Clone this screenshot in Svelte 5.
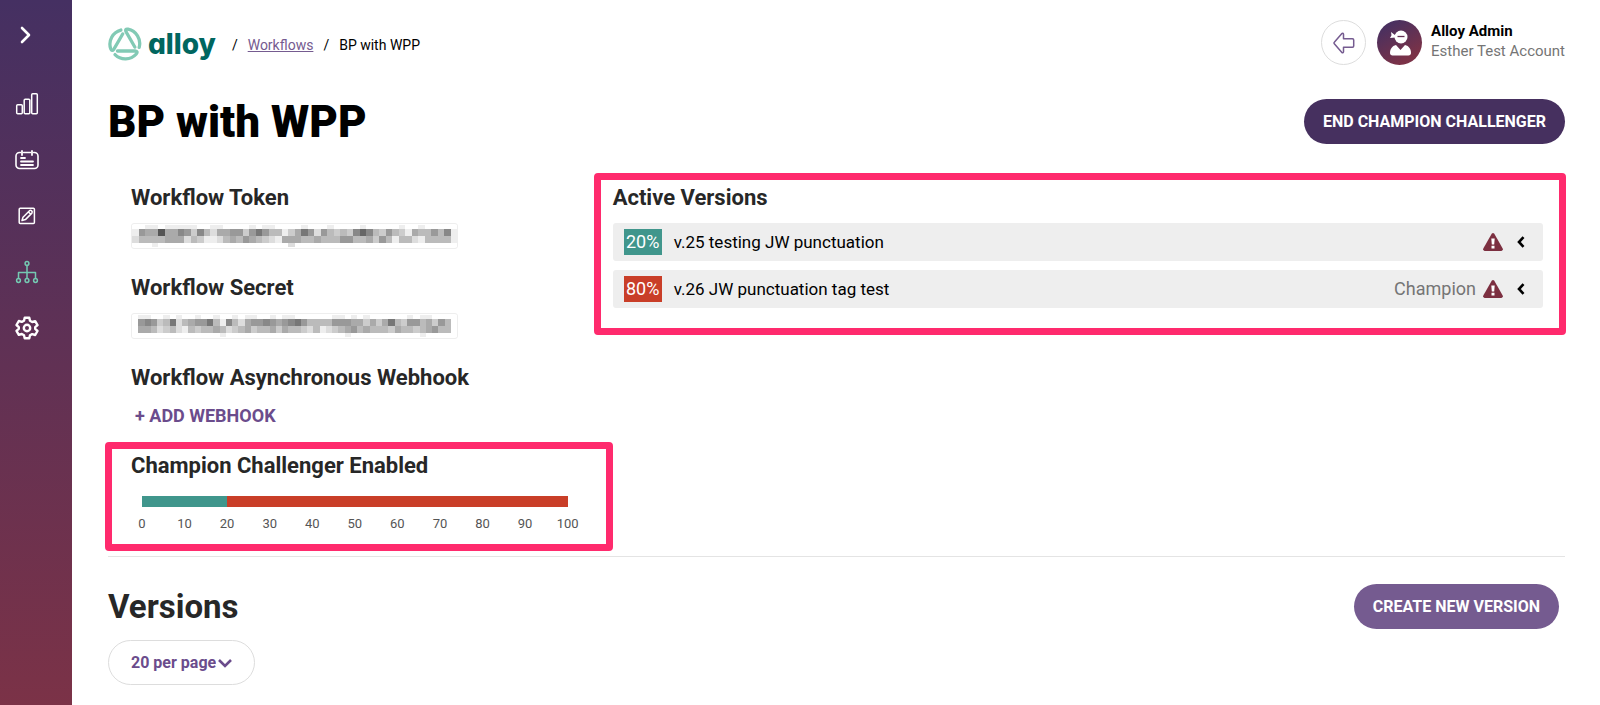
<script lang="ts">
  type Version = {
    percent: number;
    color: string;
    name: string;
    champion: boolean;
  };

  const versions: Version[] = [
    { percent: 20, color: "#40968c", name: "v.25 testing JW punctuation", champion: false },
    { percent: 80, color: "#c93e28", name: "v.26 JW punctuation tag test", champion: true },
  ];

  const ticks = [0, 10, 20, 30, 40, 50, 60, 70, 80, 90, 100];

  // One hex digit per cell, each digit is a grey level
  const credentials = [
    {
      label: "Workflow Token",
      rows: [
        "ffeefeeeeeffeeffffefeeffffefffeffffefffffeffefffff",
        "e9aa5aa89c8bdaa99c979bbeca79d9bcbc868bc9bceabb9b8e",
        "dbbbbaaadbceedbab9abcdeaaabbabbb99bbac9bebbdebbbbe",
        "fffeffffffffffffffffffffdfffffffffffffffffffffffff",
      ],
    },
    {
      label: "Workflow Secret",
      rows: [
        "feeffefeffeffeffefeeffefeeffffffeefefeffffffefeeffff",
        "f989cb7dba997be8bda9989a9879bbbb999aacaca7bc99bac9bf",
        "faabdcbdebcbbabdcbacbbacabbcdbedcba9babbbcabbcba9bbf",
        "ffffffffffffffefffffffffffffffffffefffffffffffefffff",
      ],
    },
  ];

  // Top and height of each row of cells
  const bands = [
    [0, 4],
    [4, 7],
    [11, 7],
    [18, 4],
  ];

  let perPage = "20";
</script>

<div class="shell">
  <nav class="sidebar" aria-label="Main">
    <button type="button" class="nav-item toggle" aria-label="Expand menu">
      <svg width="24" height="24" viewBox="0 0 24 24"><path d="M7 5l7 7-7 7" stroke-width="2.6" /></svg>
    </button>
    <a class="nav-item" href="#dashboard" aria-label="Dashboard">
      <svg width="24" height="24" viewBox="0 0 24 24" stroke-width="1.5">
        <rect x="1.7" y="12.7" width="5.6" height="9" rx="1" />
        <rect x="9.2" y="7.2" width="5.6" height="14.5" rx="1" />
        <rect x="16.7" y="1.7" width="5.6" height="20" rx="1" />
      </svg>
    </a>
    <a class="nav-item" href="#evaluations" aria-label="Evaluations">
      <svg width="24" height="24" viewBox="0 0 24 24" stroke-width="1.6">
        <path d="M5.5 4.5h-1A3.500 3.500 0 0 0 1 8v9a3.500 3.500 0 0 0 3.500 3.500h15A3.500 3.500 0 0 0 23 17V8a3.500 3.500 0 0 0-3.500-3.500h-1M8.500 4.500h7" />
        <path d="M7 3v4M17 3v4M6 10h4M6 13.500h12M6 17h12" stroke-width="1.8" />
      </svg>
    </a>
    <a class="nav-item" href="#review" aria-label="Manual review">
      <svg width="24" height="24" viewBox="0 0 24 24" stroke-width="1.5">
        <rect x="4.200" y="4.200" width="15.200" height="15.200" rx="1" />
        <path d="M7 16.500l1-3.300 6.500-6.500q1.200-.8 2.200.2t.2 2.200l-6.500 6.500zM13.500 8l2 2" />
      </svg>
    </a>
    <a class="nav-item active" href="#workflows" aria-label="Workflows">
      <svg width="24" height="24" viewBox="0 0 24 24" stroke-width="1.5">
        <circle cx="12" cy="3.500" r="1.900" />
        <circle cx="3.500" cy="20.500" r="1.900" />
        <circle cx="12" cy="20.500" r="1.900" />
        <circle cx="20.500" cy="20.500" r="1.900" />
        <path d="M12 5.500v13M3.500 18.500v-6h17v6" />
      </svg>
    </a>
    <a class="nav-item" href="#settings" aria-label="Settings">
      <svg width="24" height="24" viewBox="0 0 24 24" stroke-width="2.400">
        <path d="M9.700 1.800h4.600l.7 3 2.200 1.200 3-.9 2.300 4-2.300 2.100v1.700l2.300 2.100-2.300 4-3-.9-2.200 1.200-.7 3H9.700l-.7-3L6.800 18l-3 .9-2.300-4 2.300-2.100v-1.700L1.500 9l2.300-4 3 .9L9 4.800z" />
        <circle cx="12" cy="12" r="3.200" />
      </svg>
    </a>
  </nav>

  <main class="content">
    <header class="topbar">
      <a class="logo" href="#home" aria-label="alloy">
        <svg width="34" height="34" viewBox="0 0 34 34">
          {#each [0, 120, 240] as angle}
            <path
              d="M9.500 24H27Q30.500 24.500 28.300 27A14.600 14.600 0 0 1 7 27.600"
              transform="rotate({angle} 17 17)"
            />
          {/each}
        </svg>
        <span class="wordmark">alloy</span>
      </a>
      <nav class="breadcrumb" aria-label="Breadcrumb">
        <span>/</span>
        <a href="#workflows">Workflows</a>
        <span>/</span>
        <span>BP with WPP</span>
      </nav>
      <button type="button" class="back" aria-label="Go back">
        <svg width="24" height="24" viewBox="0 0 24 24">
          <path d="M11.500 3.200v4.600h9q1.200 0 1.200 1.200v6q0 1.200-1.200 1.200h-9v4.600q-.4 1.600-1.800.5L2.300 12.800q-.8-.8 0-1.600L9.700 2.700q1.400-1.100 1.800.5z" />
        </svg>
      </button>
      <div class="user">
        <span class="avatar">
          <svg width="24" height="28" viewBox="0 0 24 28" fill="#fff">
            <circle cx="13" cy="8" r="6.500" />
            <path d="M7.500 6.500L3 3l.5 3.200L2 9l5.500-.5z" />
            <path d="M9.500 7.500h7" stroke="#643053" stroke-width="1.300" />
            <path d="M8 16l4.500 5L17 16c4 1 6 4 6 8 0 1.500-1 2.500-2.500 2.500h-16C3 26.500 2 25.500 2 24c0-4 2-7 6-8z" />
          </svg>
        </span>
        <div class="user-text">
          <strong>Alloy Admin</strong>
          <span>Esther Test Account</span>
        </div>
      </div>
    </header>

    <div class="title-row">
      <h1>BP with WPP</h1>
      <button type="button" class="pill dark">End Champion Challenger</button>
    </div>

    <div class="details">
      <div class="settings">
        {#each credentials as credential}
          <section class="group">
            <h2>{credential.label}</h2>
            <div class="secret" role="img" aria-label="{credential.label} hidden">
              <svg viewBox="0 0 {credential.rows[0].length * 4} 22" preserveAspectRatio="none">
                {#each credential.rows as row, y}
                  {#each row as level, x}
                    <rect
                      x={x * 4}
                      y={bands[y][0]}
                      width="4"
                      height={bands[y][1]}
                      fill="#{level}{level}{level}"
                    />
                  {/each}
                {/each}
              </svg>
            </div>
          </section>
        {/each}

        <section class="group webhook">
          <h2>Workflow Asynchronous Webhook</h2>
          <button type="button" class="add">+ ADD WEBHOOK</button>
        </section>

        <section class="highlight challenger">
          <h2>Champion Challenger Enabled</h2>
          <div class="split">
            {#each versions as version}
              <div style:width={`${version.percent}%`} style:background={version.color}></div>
            {/each}
          </div>
          <div class="ticks">
            {#each ticks as tick}
              <span>{tick}</span>
            {/each}
          </div>
        </section>
      </div>

      <section class="highlight active-versions">
        <h2>Active Versions</h2>
        <ul>
          {#each versions as version}
            <li>
              <span class="percent" style:background={version.color}>{version.percent}%</span>
              <span class="name">{version.name}</span>
              {#if version.champion}
                <span class="champion">Champion</span>
              {/if}
              <svg class="warning" width="20" height="18" viewBox="0 0 20 18" role="img" aria-label="Warning">
                <path d="M8.700.8q1.300-1.500 2.600 0l8.400 14.700q.6 2-1.300 2.500H1.600Q-.3 17.500.3 15.500z" fill="#7c2f40" />
                <path d="M8.300 5.500h3.400l-.5 6H8.800zM8.500 12.800h3v2.700h-3z" fill="#fff" />
              </svg>
              <button type="button" class="expand" aria-label="Show {version.name}">
                <svg width="8" height="12" viewBox="0 0 8 12"><path d="M6.500 1.200L2 6l4.500 4.800" /></svg>
              </button>
            </li>
          {/each}
        </ul>
      </section>
    </div>

    <section class="versions">
      <div class="versions-head">
        <h2>Versions</h2>
        <button type="button" class="pill light">Create New Version</button>
      </div>
      <div class="per-page">
        <select bind:value={perPage} aria-label="Versions per page">
          <option value="20">20 per page</option>
          <option value="50">50 per page</option>
          <option value="100">100 per page</option>
        </select>
        <svg width="14" height="10" viewBox="0 0 14 10"><path d="M1 2l6 6 6-6" /></svg>
      </div>
    </section>
  </main>
</div>

<style>
  :global(body) {
    background: #fff;
    color: #000;
    font-family: Roboto, "Liberation Sans", sans-serif;
  }

  .shell {
    display: flex;
    min-height: 100vh;
  }

  button {
    padding: 0;
    border: 0;
    background: none;
    font-family: inherit;
    cursor: pointer;
  }

  h1,
  h2,
  ul {
    margin: 0;
    padding: 0;
  }

  svg {
    display: block;
    flex: none;
  }

  .sidebar {
    flex: none;
    box-sizing: border-box;
    width: 72px;
    padding: 7px 18px 0 0;
    background: linear-gradient(#453062, #7b3247);
  }

  .nav-item {
    display: flex;
    align-items: center;
    justify-content: center;
    width: 100%;
    height: 56px;
    color: #fff;
  }

  .nav-item svg {
    fill: none;
    stroke: currentColor;
    stroke-linecap: round;
    stroke-linejoin: round;
  }

  .toggle {
    margin-bottom: 13px;
  }

  .active {
    color: #74c9b2;
  }

  .content {
    flex: 1;
    min-width: 0;
    padding: 20px 35px 20px 36px;
  }

  .topbar {
    display: flex;
    align-items: center;
    height: 45px;
  }

  .logo {
    display: flex;
    align-items: center;
    gap: 6px;
    padding-top: 2px;
    color: #00665f;
    text-decoration: none;
  }

  .logo svg {
    fill: none;
    stroke: #82cab5;
    stroke-width: 3.3;
    stroke-linecap: round;
  }

  .wordmark {
    font-family: Inter, sans-serif;
    font-feature-settings: "cv11";
    font-size: 28px;
    font-weight: 800;
    line-height: 34px;
  }

  .breadcrumb {
    display: flex;
    flex: 1;
    gap: 10px;
    margin-left: 16px;
    padding-top: 4px;
    font-size: 14px;
    line-height: 20px;
  }

  .breadcrumb a {
    color: #755b90;
  }

  .back {
    display: flex;
    align-items: center;
    justify-content: center;
    box-sizing: border-box;
    width: 45px;
    height: 45px;
    border: 1px solid #ddd;
    border-radius: 50%;
  }

  .back svg {
    fill: none;
    stroke: #755b90;
    stroke-width: 1.5;
    stroke-linejoin: round;
  }

  .user {
    display: flex;
    align-items: center;
    gap: 9px;
    margin-left: 11px;
  }

  .avatar {
    display: flex;
    align-items: center;
    justify-content: center;
    width: 45px;
    height: 45px;
    border-radius: 50%;
    background: linear-gradient(150deg, #453062 10%, #7b3247 80%);
  }

  .user-text {
    display: flex;
    flex-direction: column;
    padding-bottom: 4px;
    font-size: 15px;
    line-height: 20px;
  }

  .user-text span {
    color: #757575;
  }

  .title-row,
  .versions-head {
    display: flex;
    align-items: center;
    justify-content: space-between;
  }

  .title-row {
    margin: 34px 0 29px;
  }

  h1 {
    font-size: 44px;
    font-weight: 900;
    line-height: 42px;
  }

  .pill {
    height: 45px;
    padding: 0 19px;
    border-radius: 23px;
    color: #fff;
    font-size: 16px;
    font-weight: 700;
    text-transform: uppercase;
  }

  .dark {
    background: #46305f;
  }

  .light {
    margin-right: 6px;
    background: #755b90;
  }

  .details {
    display: grid;
    grid-template-columns: 1fr 2fr;
    align-items: start;
    padding-bottom: 5px;
    border-bottom: 1px solid #e4e4e4;
  }

  .settings {
    padding-top: 12px;
  }

  .group {
    margin: 0 0 26px 23px;
  }

  h2 {
    color: #272727;
    font-size: 22px;
    line-height: 26px;
  }

  .secret {
    box-sizing: border-box;
    width: 327px;
    height: 26px;
    margin-top: 12px;
    padding: 1px 0;
    border: 1px solid #eee;
    border-radius: 3px;
  }

  .secret svg {
    width: 100%;
    height: 100%;
    shape-rendering: crispEdges;
  }

  .webhook {
    margin-bottom: 13px;
  }

  .add {
    display: block;
    margin: 12px 0 0 4px;
    color: #6b4c8c;
    font-size: 18px;
    font-weight: 700;
    line-height: 26px;
  }

  .highlight {
    border: 7px solid #ff2a6d;
    border-radius: 4px;
  }

  .challenger {
    margin: 0 -19px 0 -3px;
    padding: 4px 38px 12px 19px;
  }

  .split {
    display: flex;
    height: 11px;
    margin: 17px 0 9px 11px;
  }

  .ticks {
    display: flex;
    justify-content: space-between;
    margin-left: 11px;
    color: #555;
    font-size: 13px;
    line-height: 16px;
  }

  .ticks span {
    display: flex;
    justify-content: center;
    width: 0;
  }

  .active-versions {
    margin-right: -1px;
    padding: 5px 16px 20px 12px;
  }

  ul {
    display: grid;
    gap: 9px;
    margin-top: 12px;
    list-style: none;
  }

  li {
    display: flex;
    align-items: center;
    height: 38px;
    padding: 0 18px 0 11px;
    border-radius: 3px;
    background: #eee;
    font-size: 18px;
    line-height: 26px;
  }

  .percent {
    width: 38px;
    color: #fff;
    text-align: center;
  }

  .name {
    flex: 1;
    margin-left: 12px;
    font-size: 17px;
  }

  .champion {
    color: #757575;
  }

  .warning {
    margin: 0 14px 0 7px;
  }

  .expand svg {
    fill: none;
    stroke: #000;
    stroke-width: 2.6;
  }

  .versions {
    padding-top: 27px;
  }

  .versions h2 {
    font-size: 33px;
    line-height: 42px;
  }

  .per-page {
    display: inline-flex;
    align-items: center;
    box-sizing: border-box;
    height: 45px;
    margin-top: 11px;
    padding: 0 22px;
    border: 1px solid #ddd;
    border-radius: 23px;
  }

  select {
    appearance: none;
    field-sizing: content;
    margin-right: -14px;
    padding: 0 16px 0 0;
    border: 0;
    background: none;
    color: #6b4c8c;
    font-family: inherit;
    font-size: 16px;
    font-weight: 700;
    line-height: 20px;
  }

  .per-page svg {
    fill: none;
    stroke: #6b4c8c;
    stroke-width: 2.6;
    pointer-events: none;
  }
</style>
